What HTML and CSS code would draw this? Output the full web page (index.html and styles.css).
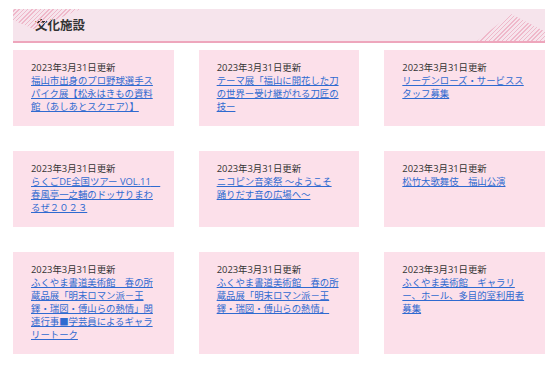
FILE: index.html
```html
<!DOCTYPE html>
<html lang="ja">
<head>
    <meta charset="UTF-8">
    <title>文化施設</title>
    <link rel="stylesheet" href="styles.css">
</head>
<body>
    <div class="section">
        <h2 class="section-title">文化施設</h2>
        <div class="cards">
            <div class="card">
                <p class="date">2023年3月31日更新</p>
                <a href="#">福山市出身のプロ野球選手スパイク展【松永はきもの資料館（あしあとスクエア）】</a>
            </div>
            <div class="card">
                <p class="date">2023年3月31日更新</p>
                <a href="#">テーマ展「福山に開花した刀の世界ー受け継がれる刀匠の技ー</a>
            </div>
            <div class="card">
                <p class="date">2023年3月31日更新</p>
                <a href="#">リーデンローズ・サービススタッフ募集</a>
            </div>
            <div class="card">
                <p class="date">2023年3月31日更新</p>
                <a href="#">らくごDE全国ツアー VOL.11　春風亭一之輔のドッサりまわるぜ２０２３</a>
            </div>
            <div class="card">
                <p class="date">2023年3月31日更新</p>
                <a href="#">ニコピン音楽祭 ～ようこそ踊りだす音の広場へ～</a>
            </div>
            <div class="card">
                <p class="date">2023年3月31日更新</p>
                <a href="#">松竹大歌舞伎　福山公演</a>
            </div>
            <div class="card">
                <p class="date">2023年3月31日更新</p>
                <a href="#">ふくやま書道美術館　春の所蔵品展「明末ロマン派－王鐸・瑞図・傅山らの熱情」関連行事■学芸員によるギャラリートーク</a>
            </div>
            <div class="card">
                <p class="date">2023年3月31日更新</p>
                <a href="#">ふくやま書道美術館　春の所蔵品展「明末ロマン派－王鐸・瑞図・傅山らの熱情」</a>
            </div>
            <div class="card">
                <p class="date">2023年3月31日更新</p>
                <a href="#">ふくやま美術館　ギャラリー、ホール、多目的室利用者募集</a>
            </div>
        </div>
    </div>
</body>
</html>
```

FILE: styles.css
```css
body {
    margin: 0;
    font-family: "Open Sans", "Noto Sans CJK JP", sans-serif;
    background: #fff;
    color: #333;
}

.section {
    padding: 9px 9px 0 13px;
}

.section-title {
    position: relative;
    margin: 0;
    height: 32px;
    line-height: 32px;
    padding-left: 22px;
    font-family: "Noto Sans CJK JP", sans-serif;
    font-size: 12.5px;
    font-weight: bold;
    color: #333;
    background-color: #f6e4ec;
    border-bottom: 2px solid #eea6bc;
    overflow: hidden;
}

/* hatched corners */
.section-title::before,
.section-title::after {
    content: '';
    position: absolute;
    background: repeating-linear-gradient(
        -45deg,
        #efb8ca 0,
        #efb8ca 1px,
        transparent 1px,
        transparent 3px
    );
}

.section-title::before {
    left: 0;
    top: 0;
    width: 68px;
    height: 20px;
    clip-path: polygon(0 0, 100% 0, 30% 100%, 0 55%);
}

.section-title::after {
    right: 0;
    bottom: 0;
    width: 68px;
    height: 27px;
    clip-path: polygon(0 100%, 50% 0, 100% 65%, 100% 100%);
}

.cards {
    display: grid;
    grid-template-columns: repeat(3, 1fr);
    gap: 25px;
    margin-top: 7px;
}

.card {
    background-color: #fce0ea;
    padding: 11px 20px 13px 18px;
    font-size: 9.4px;
    line-height: 13px;
}

.date {
    margin: 0;
    color: #333;
}

.card a {
    color: #2f6ad0;
    text-decoration: underline;
    word-break: break-all;
}
```
